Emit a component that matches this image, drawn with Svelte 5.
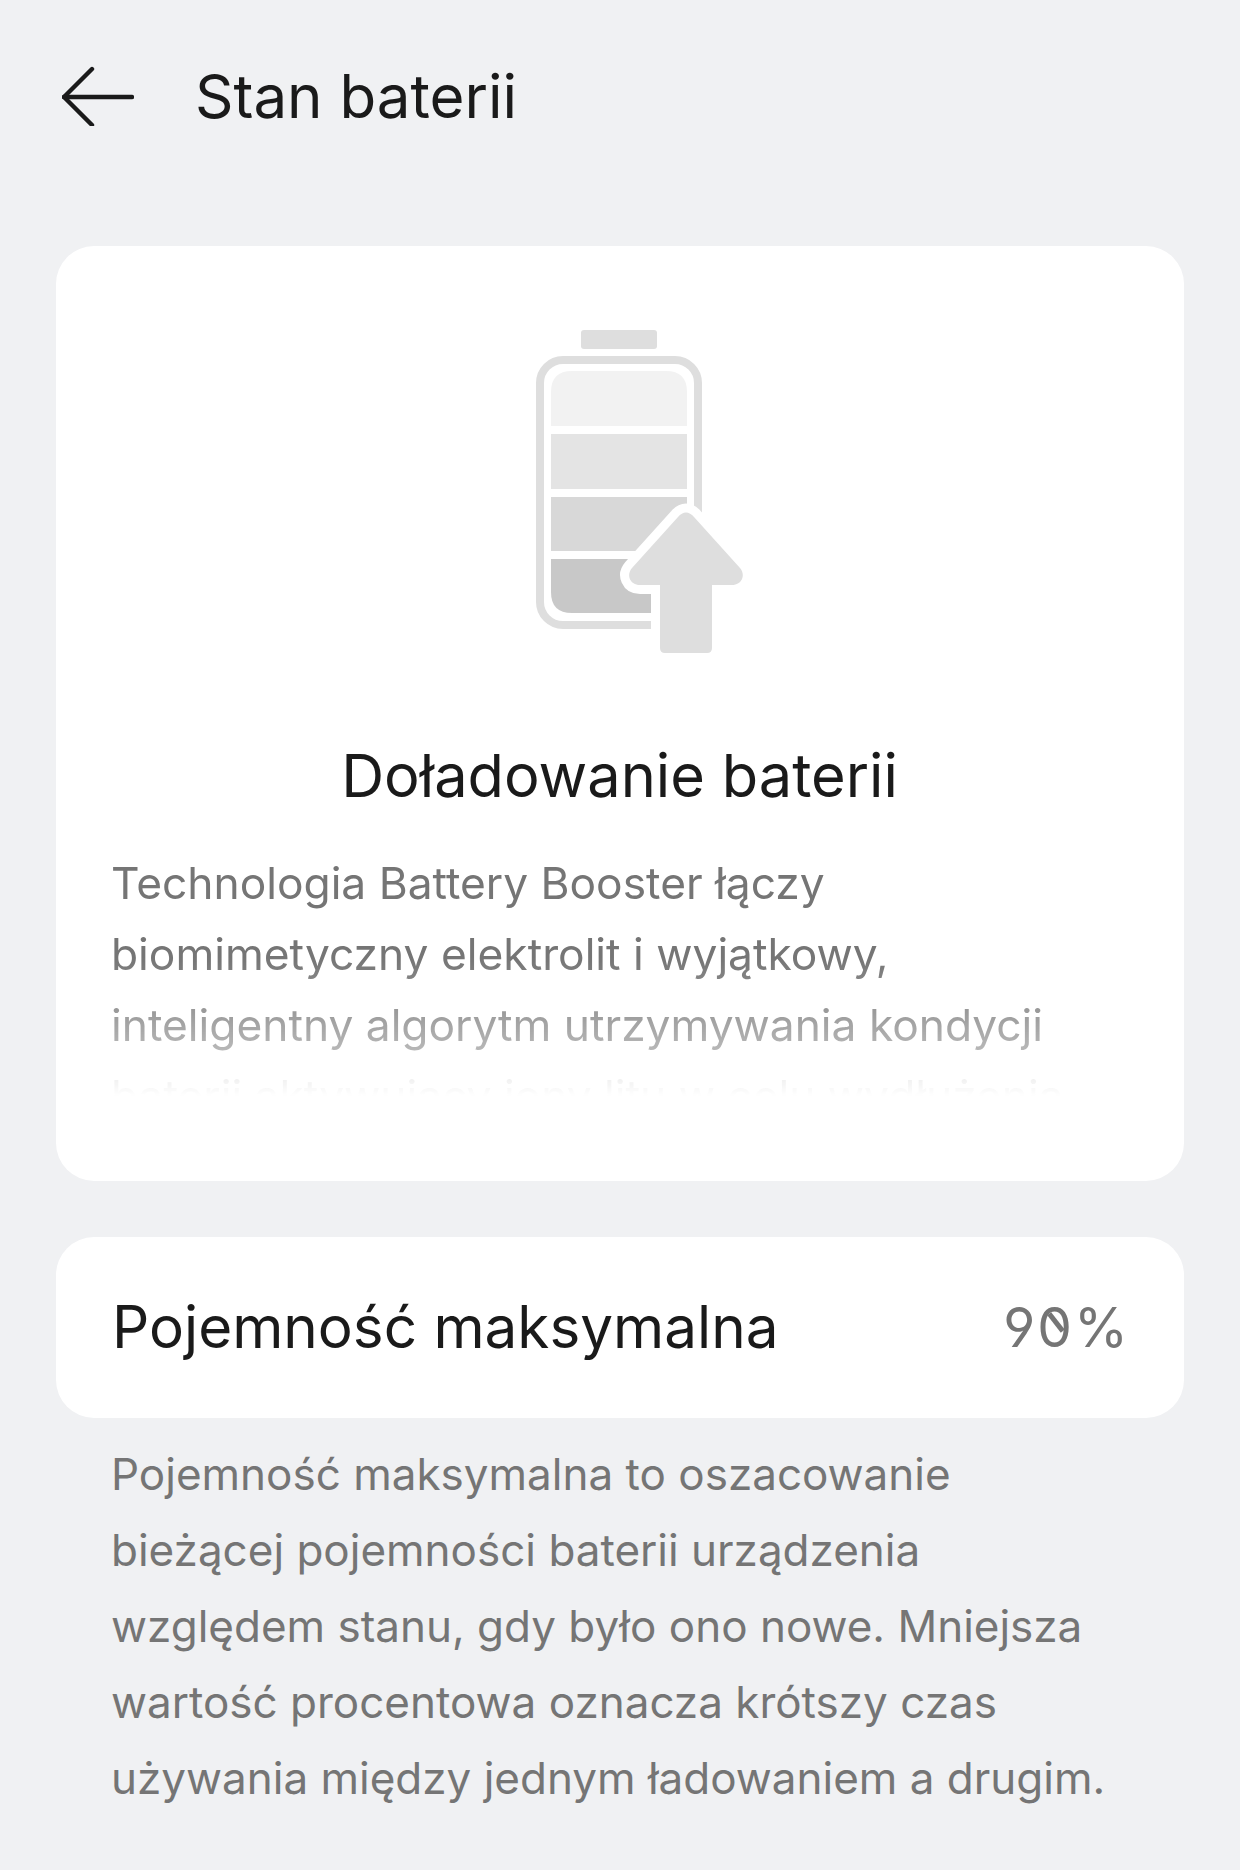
<script>
  const seg = [
    { y: 434, h: 55, c: '#e4e4e4' },
    { y: 497, h: 54, c: '#d8d8d8' }
  ];
  const arrow = 'M660 653V585H640C630 585 626 575 632 568L678 517C683 511 689 511 694 517L740 568C746 575 742 585 732 585H712V648Q712 653 707 653H665Q660 653 660 648Z';
</script>

<div class="page">
  <header class="head">
    <svg class="back" width="72" height="60" viewBox="0 0 72 60" fill="none" stroke="#1a1a1a" stroke-width="4.4" stroke-linecap="round" stroke-linejoin="round">
      <path d="M70 31H2" />
      <path d="M30 3L2 31L30 59" />
    </svg>
    <h1>Stan baterii</h1>
  </header>

  <section class="card top">
    <svg class="bat" width="320" height="370" viewBox="460 310 320 370">
      <rect x="581" y="330" width="76" height="19" rx="3" fill="#dedede" />
      <rect x="540" y="360" width="158" height="265" rx="23" fill="none" stroke="#dedede" stroke-width="8" />
      <path d="M551 426V392Q551 371 572 371H666Q687 371 687 392V426Z" fill="#f2f2f2" />
      {#each seg as s}
        <rect x="551" y={s.y} width="136" height={s.h} fill={s.c} />
      {/each}
      <path d="M551 559H687V613H572Q551 613 551 592Z" fill="#c8c8c8" />
      <path d={arrow} fill="#fff" stroke="#fff" stroke-width="18" stroke-linejoin="round" />
      <path d={arrow} fill="#dedede" />
    </svg>
    <h2>Doładowanie baterii</h2>
    <p class="desc">Technologia Battery Booster łączy biomimetyczny elektrolit i wyjątkowy, inteligentny algorytm utrzymywania kondycji baterii aktywujący jony litu w celu wydłużenia żywotności baterii.</p>
  </section>

  <section class="card row">
    <span class="label">Pojemność maksymalna</span>
    <span class="val">9<span class="zero">0</span>%</span>
  </section>

  <p class="note">Pojemność maksymalna to oszacowanie bieżącej pojemności baterii urządzenia względem stanu, gdy było ono nowe. Mniejsza wartość procentowa oznacza krótszy czas używania między jednym ładowaniem a drugim.</p>
</div>

<style>
  :global(body) {
    margin: 0;
    background: #f0f1f3;
  }
  .page {
    height: 1870px;
    box-sizing: border-box;
    padding: 0 56px;
    overflow: hidden;
    font-family: Inter, "Noto Sans", sans-serif;
    color: #1a1a1a;
  }
  .head {
    display: flex;
    align-items: center;
    height: 192px;
    padding-left: 6px;
  }
  .back {
    flex: none;
  }
  h1 {
    margin: 0 0 0 61px;
    font-size: 60px;
    font-weight: 400;
    line-height: 70px;
  }
  .card {
    background: #fff;
    border-radius: 38px;
  }
  .top {
    margin-top: 54px;
    height: 935px;
    box-sizing: border-box;
    padding: 64px 56px 0 55px;
    display: flex;
    flex-direction: column;
    align-items: center;
  }
  .bat {
    flex: none;
    display: block;
  }
  h2 {
    margin: 60px 0 0;
    font-size: 59.5px;
    font-weight: 400;
    line-height: 70px;
  }
  .desc {
    margin: 38px 0 0;
    width: 100%;
    height: 248px;
    overflow: hidden;
    font-size: 44.3px;
    line-height: 71px;
    color: #757575;
    -webkit-mask-image: linear-gradient(to bottom, #000 0, #000 110px, rgba(0,0,0,.8) 150px, rgba(0,0,0,.5) 205px, rgba(0,0,0,.12) 228px, transparent 248px);
    mask-image: linear-gradient(to bottom, #000 0, #000 110px, rgba(0,0,0,.8) 150px, rgba(0,0,0,.5) 205px, rgba(0,0,0,.12) 228px, transparent 248px);
  }
  .row {
    margin-top: 56px;
    height: 181px;
    box-sizing: border-box;
    padding: 0 54px 2px 56px;
    display: flex;
    align-items: center;
    justify-content: space-between;
  }
  .label {
    font-size: 58.4px;
    line-height: 70px;
  }
  .val {
    font-size: 55px;
    color: #757575;
    letter-spacing: 2px;
    font-feature-settings: "ss01" 1;
  }
  .zero {
    position: relative;
    display: inline-block;
  }
  .zero::after {
    content: "";
    position: absolute;
    left: 22%;
    top: 40%;
    width: 60%;
    height: 5px;
    background: #757575;
    transform: rotate(52deg);
    transform-origin: center;
  }
  .note {
    margin: 18px 0 0;
    padding: 0 56px 0 55px;
    font-size: 44px;
    line-height: 76px;
    color: #757575;
  }
</style>
